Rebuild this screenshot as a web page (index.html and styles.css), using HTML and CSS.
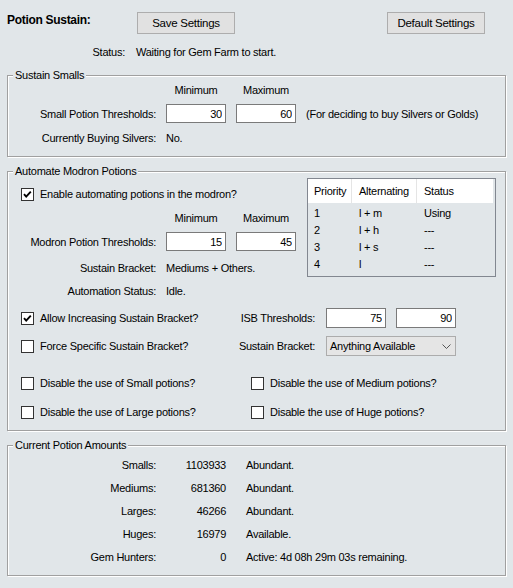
FILE: index.html
```html
<!DOCTYPE html>
<html>
<head>
<meta charset="utf-8">
<link rel="stylesheet" href="styles.css">
</head>
<body>
<div class="header">
  <div class="title">Potion Sustain:</div>
  <div class="btn btn-save">Save Settings</div>
  <div class="btn btn-default">Default Settings</div>
</div>
<div class="status-row">
  <span class="status-label">Status:</span>
  <span class="status-text">Waiting for Gem Farm to start.</span>
</div>

<fieldset class="group g1">
  <legend>Sustain Smalls</legend>
  <div class="row heads first">
    <div class="lbl"></div>
    <div class="head">Minimum</div>
    <div class="head">Maximum</div>
  </div>
  <div class="row inputs">
    <div class="lbl">Small Potion Thresholds:</div>
    <input class="num" type="text" value="30">
    <input class="num" type="text" value="60">
    <div class="note">(For deciding to buy Silvers or Golds)</div>
  </div>
  <div class="row buying">
    <div class="lbl">Currently Buying Silvers:</div>
    <div class="val">No.</div>
  </div>
</fieldset>

<fieldset class="group g2">
  <legend>Automate Modron Potions</legend>
  <div class="upper">
    <div class="upper-left">
      <label class="check enable"><span class="box"><svg width="11" height="11" viewBox="0 0 11 11"><path d="M2 5.2 L4.2 7.6 L8.8 2.6" fill="none" stroke="#000" stroke-width="1.9"/></svg></span>Enable automating potions in the modron?</label>
      <div class="row heads">
        <div class="lbl"></div>
        <div class="head">Minimum</div>
        <div class="head">Maximum</div>
      </div>
      <div class="row inputs">
        <div class="lbl">Modron Potion Thresholds:</div>
        <input class="num" type="text" value="15">
        <input class="num" type="text" value="45">
      </div>
      <div class="row bracket">
        <div class="lbl">Sustain Bracket:</div>
        <div class="val">Mediums + Others.</div>
      </div>
      <div class="row autostatus">
        <div class="lbl">Automation Status:</div>
        <div class="val">Idle.</div>
      </div>
    </div>
    <div class="listview">
      <div class="lv-head">
        <div class="c1">Priority</div>
        <div class="c2">Alternating</div>
        <div class="c3">Status</div>
      </div>
      <div class="lv-body">
        <div class="lv-row"><div class="c1">1</div><div class="c2">l + m</div><div class="c3">Using</div></div>
        <div class="lv-row"><div class="c1">2</div><div class="c2">l + h</div><div class="c3">---</div></div>
        <div class="lv-row"><div class="c1">3</div><div class="c2">l + s</div><div class="c3">---</div></div>
        <div class="lv-row"><div class="c1">4</div><div class="c2">l</div><div class="c3">---</div></div>
      </div>
    </div>
  </div>
  <div class="isb-grid">
    <label class="check"><span class="box"><svg width="11" height="11" viewBox="0 0 11 11"><path d="M2 5.2 L4.2 7.6 L8.8 2.6" fill="none" stroke="#000" stroke-width="1.9"/></svg></span>Allow Increasing Sustain Bracket?</label>
    <div class="lbl">ISB Thresholds:</div>
    <div class="pair">
      <input class="num" type="text" value="75">
      <input class="num" type="text" value="90">
    </div>
    <label class="check"><span class="box"></span>Force Specific Sustain Bracket?</label>
    <div class="lbl">Sustain Bracket:</div>
    <div class="dropdown"><span>Anything Available</span><svg width="9" height="5" viewBox="0 0 9 5"><path d="M0.5 0.5 L4.5 4.5 L8.5 0.5" fill="none" stroke="#555" stroke-width="1"/></svg></div>
  </div>
  <div class="disable-grid">
    <label class="check"><span class="box"></span>Disable the use of Small potions?</label>
    <label class="check"><span class="box"></span>Disable the use of Medium potions?</label>
    <label class="check"><span class="box"></span>Disable the use of Large potions?</label>
    <label class="check"><span class="box"></span>Disable the use of Huge potions?</label>
  </div>
</fieldset>

<fieldset class="group g3">
  <legend>Current Potion Amounts</legend>
  <div class="amounts">
    <div class="lbl">Smalls:</div><div class="amt">1103933</div><div class="val">Abundant.</div>
    <div class="lbl">Mediums:</div><div class="amt">681360</div><div class="val">Abundant.</div>
    <div class="lbl">Larges:</div><div class="amt">46266</div><div class="val">Abundant.</div>
    <div class="lbl">Huges:</div><div class="amt">16979</div><div class="val">Available.</div>
    <div class="lbl">Gem Hunters:</div><div class="amt">0</div><div class="val">Active: 4d 08h 29m 03s remaining.</div>
  </div>
</fieldset>
</body>
</html>
```
FILE: styles.css
```css
* { box-sizing: border-box; }
html, body { margin: 0; padding: 0; }
body {
  background: #e1e6e9;
  font-family: "Liberation Sans", Arial, sans-serif;
  font-size: 11px;
  line-height: 14px;
  letter-spacing: -0.25px;
  color: #000;
  width: 513px;
  height: 588px;
  overflow: hidden;
}
.header {
  display: flex;
  align-items: flex-start;
  padding: 12px 0 0 7px;
  height: 34px;
}
.title {
  width: 130px;
  font-weight: bold;
  font-size: 12px;
  letter-spacing: -0.3px;
  margin-top: 1px;
}
.btn {
  width: 98px;
  height: 22px;
  background: #e1e1e1;
  border: 1px solid #adadad;
  text-align: center;
  line-height: 21px;
  font-size: 11.5px;
}
.btn-default { margin-left: 152px; }
.status-row {
  margin-top: 11px;
  padding-left: 7px;
  display: flex;
}
.status-label { width: 118px; text-align: right; }
.status-text { margin-left: 11px; }

.group {
  margin: 0 7px;
  padding: 0;
  border: 1px solid #a0a0a0;
  box-shadow: inset 1px 1px 0 #fff, 1px 1px 0 #fff;
  min-width: 0;
}
.group legend {
  margin-left: 5px;
  padding: 0 2px;
  background: #e1e6e9;
  line-height: 14px;
}
.g1 { margin-top: 9px; padding-bottom: 11px; }
.g2 { margin-top: 7px; padding-bottom: 11px; }
.g3 { margin-top: 7px; padding-bottom: 11px; }

.row {
  display: flex;
  align-items: center;
  gap: 10px;
  height: 14px;
  white-space: nowrap;
}
.row.inputs { height: 19px; }
.lbl { width: 148px; flex: none; text-align: right; white-space: nowrap; }
.head { width: 60px; text-align: center; }
.val, .note { white-space: nowrap; }

.g1 .heads { margin-top: 1px; }
.g1 .inputs { margin-top: 7px; }
.g1 .buying { margin-top: 8px; }

.num {
  width: 60px;
  height: 19px;
  border: 1px solid #7a7a7a;
  background: #fff;
  font: inherit;
  letter-spacing: inherit;
  text-align: right;
  padding: 0 3px 0 0;
  margin: 0;
  color: #000;
  flex: none;
}

.upper { display: flex; }
.upper-left { width: 299px; display: flex; flex-direction: column; }
.upper-left .heads { margin-top: 10px; }
.upper-left .inputs { margin-top: 7px; }
.upper-left .bracket { margin-top: 10px; }
.upper-left .autostatus { margin-top: 9px; }

.check {
  display: flex;
  align-items: center;
  white-space: nowrap;
  height: 14px;
}
.box {
  width: 13px;
  height: 13px;
  border: 1px solid #333;
  background: #fff;
  margin-right: 6px;
  flex: none;
  display: flex;
  align-items: center;
  justify-content: center;
}
.enable { margin: 9px 0 0 13px; }

.listview {
  width: 189px;
  height: 99px;
  border: 1px solid #828790;
  flex: none;
}
.lv-head {
  display: flex;
  height: 24px;
  background: #fff;
  margin-right: 2px;
}
.lv-head > div { line-height: 25px; border-right: 1px solid #e5e5e5; }
.lv-head > .c3 { border-right: none; }
.lv-body { padding-top: 2px; }
.lv-row { display: flex; height: 17px; line-height: 17px; }
.c1 { width: 44px; padding-left: 6px; }
.c2 { width: 65px; padding-left: 7px; }
.c3 { flex: 1; padding-left: 7px; }

.isb-grid {
  display: grid;
  grid-template-columns: 190px 93px 130px;
  column-gap: 11px;
  grid-template-rows: 20px 20px;
  row-gap: 8px;
  padding-left: 13px;
  margin-top: 10px;
  align-items: center;
}
.isb-grid .lbl { width: auto; }
.pair { display: flex; gap: 10px; }
.pair .num { height: 20px; }
.dropdown {
  width: 130px;
  height: 20px;
  background: #e5e5e5;
  border: 1px solid #acacac;
  display: flex;
  align-items: center;
  justify-content: space-between;
  padding: 0 4px 0 3px;
}
.disable-grid {
  display: grid;
  grid-template-columns: 230px auto;
  grid-template-rows: 14px 14px;
  row-gap: 15px;
  padding-left: 13px;
  margin-top: 20px;
}

.amounts {
  display: grid;
  grid-template-columns: 148px 60px auto;
  column-gap: 10px;
  grid-auto-rows: 14px;
  row-gap: 9px;
  padding-top: 6px;
}
.amt { text-align: right; }
.amounts .val { margin-left: 10px; }
```
